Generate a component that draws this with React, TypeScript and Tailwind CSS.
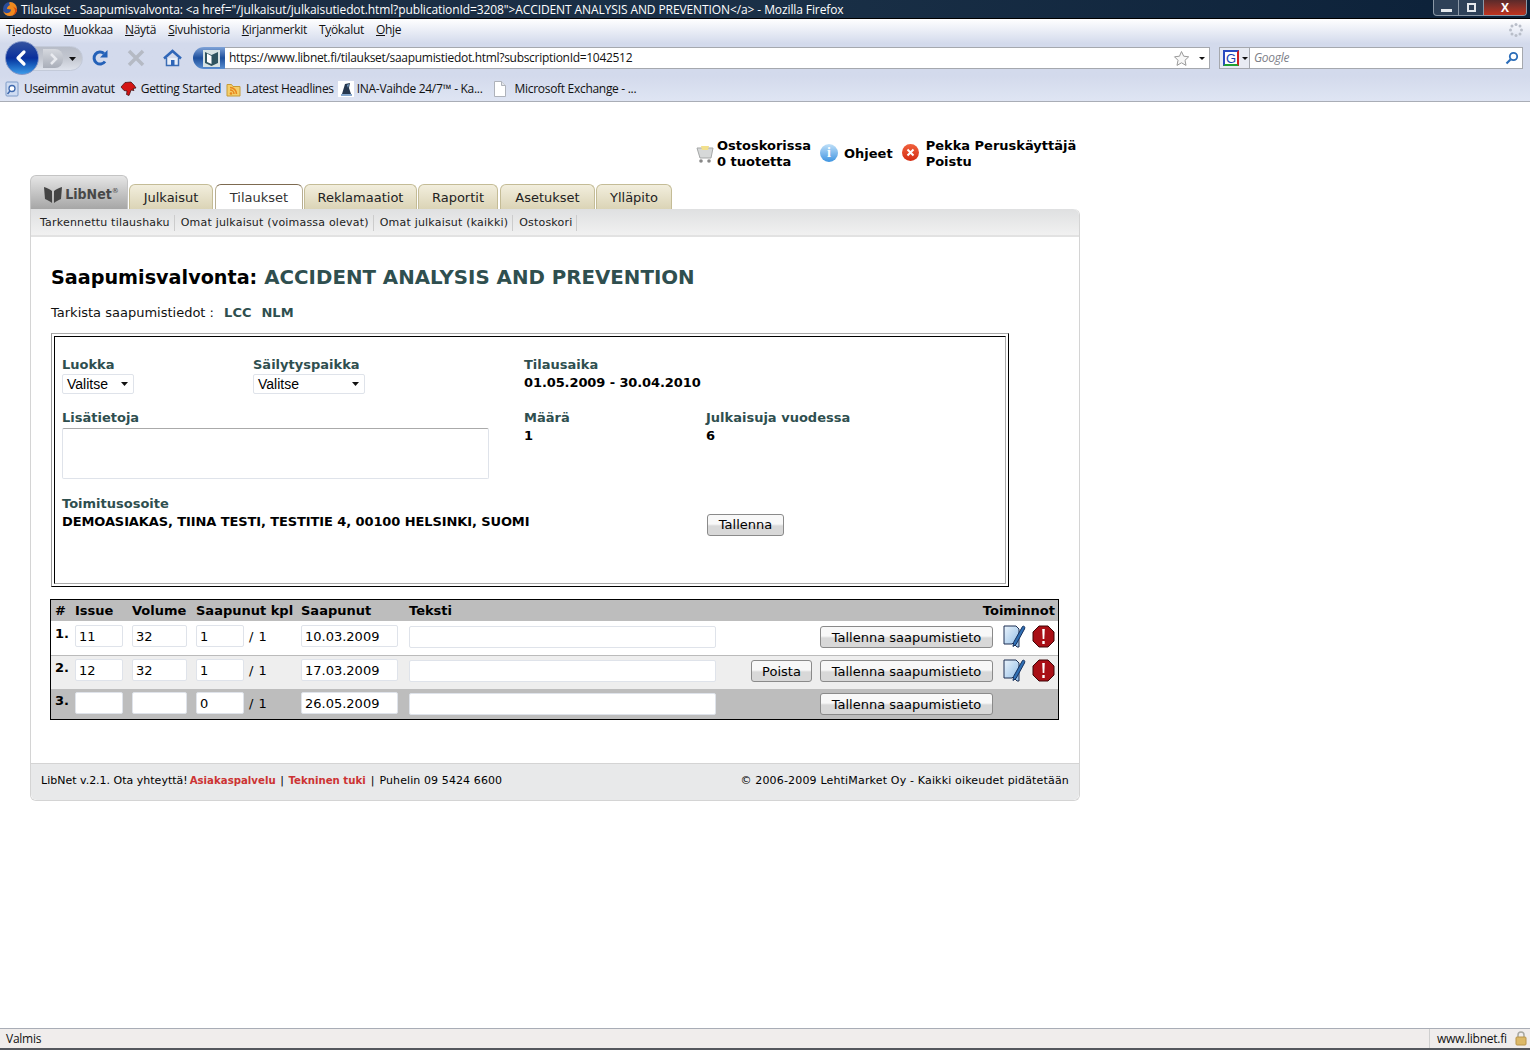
const chromeFont = "font-['Open_Sans','Noto_Sans',sans-serif]";

function Underlined({ text, at }: { text: string; at: number }) {
  return (
    <span>
      {text.slice(0, at)}
      <span className="underline">{text[at]}</span>
      {text.slice(at + 1)}
    </span>
  );
}

function FirefoxIcon() {
  return (
    <svg width="16" height="16" viewBox="0 0 16 16">
      <circle cx="8" cy="8" r="7" fill="#2a4d9c" />
      <path d="M8 1a7 7 0 0 1 7 7c0 4-3 7-7 7-3.500 0-6-2-7-5 1 1.500 3 2.500 5 2 2-.5 3-2 3-3.500L5 8c0-2 1-3 3-4L7 2z" fill="#f08a1d" />
      <path d="M15 8c0 4-3 7-7 7 2 0 5-2 5-5 0-2-1-4-3-5z" fill="#d9480f" />
    </svg>
  );
}

function NavButtons() {
  return (
    <div className="relative h-[30px] w-[76px] shrink-0">
      <div className="absolute left-[12px] top-[3px] h-[25px] w-[66px] rounded-r-full border border-[#c3cad9] bg-gradient-to-b from-[#b7bcc7] via-[#c4c8d1] to-[#dfe3ec]" />
      <div className="absolute left-[38px] top-[6px] h-[19px] w-[20px] rounded-r-[8px] bg-gradient-to-b from-[#d6d9df] to-[#a9aeb9]" />
      <div className="absolute left-[0px] top-[-2px] flex h-[34px] w-[34px] items-center justify-center rounded-full border border-[#8296c8] bg-gradient-to-b from-[#33519f] via-[#0a2f9c] to-[#3d9ae8]">
        <svg width="18" height="18" viewBox="0 0 18 18">
          <path d="M11 3 5 9l6 6" fill="none" stroke="#fff" strokeWidth="3.200" strokeLinecap="round" strokeLinejoin="round" />
        </svg>
      </div>
      <svg className="absolute left-[41px] top-[9px]" width="14" height="14" viewBox="0 0 14 14">
        <path d="M5 2l5 5-5 5" fill="none" stroke="#e8eaef" strokeWidth="2.500" />
      </svg>
      <svg className="absolute left-[64px] top-[14px]" width="7" height="4" viewBox="0 0 7 4">
        <path d="M0 0h7L3.500 4z" fill="#111" />
      </svg>
    </div>
  );
}

function ReloadIcon() {
  return (
    <svg width="18" height="18" viewBox="0 0 18 18">
      <path d="M14 12.500A6 6 0 1 1 13 4.500" fill="none" stroke="#2461b8" strokeWidth="3" />
      <path d="M16.500 1v7.500H9z" fill="#2461b8" />
    </svg>
  );
}

function StopIcon() {
  return (
    <svg width="18" height="18" viewBox="0 0 18 18">
      <path d="M2 2l14 14M16 2 2 16" stroke="#b5bac4" strokeWidth="3.500" />
    </svg>
  );
}

function HomeIcon() {
  return (
    <svg width="19" height="18" viewBox="0 0 19 18">
      <path d="M3.500 9v7.500h12V9" fill="#e8eef8" stroke="#3a6cb4" strokeWidth="1.500" />
      <path d="M1 9.500 9.500 2l8.500 7.500" fill="none" stroke="#2f66b8" strokeWidth="2.500" />
      <rect x="8" y="11" width="3.500" height="5.500" fill="#2f66b8" />
    </svg>
  );
}

function SiteIdentity() {
  return (
    <div className="flex h-[22px] w-[32px] shrink-0 items-center justify-end rounded-l-full bg-gradient-to-b from-[#7fa3d8] via-[#1d4f9c] to-[#5b8fd0] pr-[5px]">
      <span className="flex h-[17px] w-[17px] items-center justify-center bg-[#d8e4e4]">
        <svg width="15" height="15" viewBox="0 0 15 15">
          <path d="M1 1l6.500 3L14 1v11l-6.500 3L1 12z" fill="#2f5560" />
          <path d="M3 2.500 7.500 5v8L3 11z" fill="#fff" />
        </svg>
      </span>
    </div>
  );
}

function BookmarkIcon({ kind }: { kind: string }) {
  if (kind === "recent") {
    return (
      <svg width="16" height="16" viewBox="0 0 16 16">
        <rect x="2" y="1" width="12" height="14" rx="1" fill="#cfdcf2" stroke="#7f9cc8" />
        <circle cx="8" cy="7.500" r="3" fill="#fff" stroke="#3f69ad" strokeWidth="1.300" />
        <path d="M6 10l-2.500 3" stroke="#3f69ad" strokeWidth="1.500" />
      </svg>
    );
  }
  if (kind === "start") {
    return (
      <svg width="17" height="16" viewBox="0 0 17 16">
        <path d="M1 6 5 1.500l6-.5 3 3 2 3-3 .5 1 2-3-.5-1 3-1 2.500-2.500-1L7 10 4 9.500z" fill="#d41414" stroke="#3a0a0a" strokeWidth=".7" />
      </svg>
    );
  }
  if (kind === "rss") {
    return (
      <svg width="16" height="16" viewBox="0 0 16 16">
        <path d="M1 3.500V15h13V5.500H7L5.500 3.500z" fill="#f3cf6c" stroke="#c79b36" />
        <circle cx="5" cy="12.500" r="1.300" fill="#e8851c" />
        <path d="M4 9a4 4 0 0 1 4 4M4 6.500A6.500 6.500 0 0 1 10.500 13" fill="none" stroke="#e8851c" strokeWidth="1.500" />
      </svg>
    );
  }
  if (kind === "ina") {
    return (
      <svg width="16" height="16" viewBox="0 0 16 16">
        <rect width="16" height="16" fill="#fff" />
        <path d="M4 13 7 3l5-1-1 5 2 6z" fill="#26384f" />
        <path d="M9 4l2-1-1 4z" fill="#7fa8d0" />
        <path d="M3 14h11" stroke="#5b88bb" strokeWidth="1.500" />
      </svg>
    );
  }
  return (
    <svg width="16" height="16" viewBox="0 0 16 16">
      <path d="M2.500 .5h7l4 4v11h-11z" fill="#fff" stroke="#aeb2ba" />
      <path d="M9.500 .5v4h4" fill="#e4e6ea" stroke="#aeb2ba" />
    </svg>
  );
}

function BrowserChrome() {
  const menus: [string, number][] = [
    ["Tiedosto", 1],
    ["Muokkaa", 0],
    ["Näytä", 0],
    ["Sivuhistoria", 0],
    ["Kirjanmerkit", 0],
    ["Työkalut", 1],
    ["Ohje", 0],
  ];
  const bookmarks = [
    { kind: "recent", label: "Useimmin avatut", item: "mr-[5px] gap-[4px]" },
    { kind: "start", label: "Getting Started", item: "mr-[5px] gap-[4px]" },
    { kind: "rss", label: "Latest Headlines", item: "mr-[4px] gap-[4px]" },
    { kind: "ina", label: "INA-Vaihde 24/7™ - Ka...", item: "mr-[9px] gap-[3px]" },
    { kind: "page", label: "Microsoft Exchange - ...", item: "gap-[7px]" },
  ];

  return (
    <div className={`${chromeFont} shrink-0 text-[12px] tracking-[-0.3px]`}>
      <div className="flex h-[18px] items-center justify-between bg-gradient-to-r from-[#1c2c42] via-[#1a3047] to-[#0b2038] pl-[2px] text-[12px] tracking-[-0.1px] text-white">
        <div className="flex items-center gap-[3px]">
          <FirefoxIcon />
          <span className="whitespace-nowrap pt-px">
            {'Tilaukset - Saapumisvalvonta: <a href="/julkaisut/julkaisutiedot.html?publicationId=3208">ACCIDENT ANALYSIS AND PREVENTION</a> - Mozilla Firefox'}
          </span>
        </div>
        <div className="mr-[3px] flex h-[16px] self-start overflow-hidden rounded-b-[4px] border border-t-0 border-[#8b98a6] bg-[#2e4158]">
          <span className="flex w-[25px] items-end justify-center border-r border-[#8b98a6] pb-[3px]">
            <span className="h-[3px] w-[11px] bg-[#e4e8ec]" />
          </span>
          <span className="flex w-[25px] items-center justify-center border-r border-[#8b98a6]">
            <span className="h-[9px] w-[9px] border-2 border-[#e4e8ec]" />
          </span>
          <span className="flex w-[42px] items-center justify-center bg-gradient-to-b from-[#5a2a2a] to-[#c0321c] text-[12px] font-bold leading-none">
            X
          </span>
        </div>
      </div>
      <div className="h-px bg-black" />
      <div className="bg-gradient-to-b from-[#ffffff] via-[#d3daec] via-[30%] to-[#d3daec]">
        <div className="flex h-[21px] items-center justify-between pl-[6px] pr-[6px] text-[#111]">
          <div className="flex gap-[12px]">
            {menus.map(([m, at]) => (
              <Underlined key={m} text={m} at={at} />
            ))}
          </div>
          <svg width="16" height="16" viewBox="0 0 16 16">
            <g fill="#b9bec9">
              <circle cx="8" cy="2.500" r="1.500" />
              <circle cx="12" cy="4" r="1.500" />
              <circle cx="13.500" cy="8" r="1.500" />
              <circle cx="12" cy="12" r="1.500" />
              <circle cx="8" cy="13.500" r="1.500" />
              <circle cx="4" cy="12" r="1.500" />
              <circle cx="2.500" cy="8" r="1.500" />
              <circle cx="4" cy="4" r="1.500" />
            </g>
          </svg>
        </div>
        <div className="flex h-[36px] items-center pl-[5px] pr-[7px]">
          <NavButtons />
          <div className="ml-[10px] flex w-[100px] shrink-0 items-center gap-[18px]">
            <ReloadIcon />
            <StopIcon />
            <HomeIcon />
          </div>
          <div className="ml-[2px] flex grow items-center">
            <SiteIdentity />
            <div className="flex h-[22px] grow items-center justify-between border border-l-0 border-[#a5a8ae] bg-white pl-[4px] pr-[4px] text-[#111]">
              <span>https://www.libnet.fi/tilaukset/saapumistiedot.html?subscriptionId=1042512</span>
              <span className="flex items-center gap-[9px]">
                <svg width="17" height="17" viewBox="0 0 17 17">
                  <path d="M8.500 1.500l2.200 4.700 5 .6-3.700 3.500 1 5.100-4.500-2.600-4.500 2.600 1-5.100L1.500 6.800l5-.6z" fill="#f7f7f7" stroke="#9a9a9a" />
                </svg>
                <svg width="6" height="3" viewBox="0 0 6 3">
                  <path d="M0 0h6L3 3z" fill="#111" />
                </svg>
              </span>
            </div>
          </div>
          <div className="ml-[9px] flex h-[22px] w-[304px] shrink-0 items-center border border-[#a5a8ae] bg-white">
            <div className="flex h-full w-[30px] items-center gap-[3px] border-r border-[#a5a8ae] bg-[#e8ebf3] pl-[3px]">
              <span className="flex h-[16px] w-[16px] items-center justify-center border-2 border-t-[#2a4bc0] border-l-[#2a4bc0] border-r-[#d02020] border-b-[#20a030] bg-white font-['Liberation_Sans',sans-serif] text-[13px] leading-none text-[#1a3fb0]">
                G
              </span>
              <svg width="6" height="3" viewBox="0 0 6 3">
                <path d="M0 0h6L3 3z" fill="#111" />
              </svg>
            </div>
            <span className="ml-[4px] grow italic text-[#7d8088]">Google</span>
            <svg className="mr-[3px]" width="14" height="14" viewBox="0 0 14 14">
              <circle cx="8.500" cy="5.500" r="3.700" fill="none" stroke="#2a6cb8" strokeWidth="1.800" />
              <path d="M5.500 8.500 1.500 12.500" stroke="#2a6cb8" strokeWidth="2.200" />
            </svg>
          </div>
        </div>
        <div className="flex h-[25px] items-center bg-gradient-to-b from-[#d3daec] to-[#dfe5f3] pl-[4px] text-[#111]">
          {bookmarks.map((b) => (
            <div key={b.label} className={`${b.item} flex items-center`}>
              <BookmarkIcon kind={b.kind} />
              <span>{b.label}</span>
            </div>
          ))}
        </div>
      </div>
      <div className="h-px bg-[#a9adb6]" />
    </div>
  );
}

function UserLinks() {
  return (
    <div className="ml-[665px] flex h-[73px] w-[385px] items-start pt-[36px] text-[13px] font-bold leading-[16px] text-black">
      <svg className="ml-[1px] mt-[6px]" width="18" height="20" viewBox="0 0 18 20">
        <path d="M1 4h16l-2 10H4z" fill="#d6d8d8" stroke="#a5a7a7" />
        <path d="M5 2h8l-1 4H6z" fill="#f2e08c" />
        <circle cx="5" cy="17" r="1.800" fill="#888" />
        <circle cx="13" cy="17" r="1.800" fill="#888" />
      </svg>
      <div className="ml-[3px] whitespace-nowrap">
        Ostoskorissa
        <br />
        0 tuotetta
      </div>
      <span className="ml-[9px] mt-[6px] flex h-[18px] w-[18px] items-center justify-center rounded-full bg-gradient-to-b from-[#bfe0f8] to-[#3c94e0] font-['Liberation_Serif',serif] text-[14px] text-white">
        i
      </span>
      <span className="ml-[6px] mt-[8px]">Ohjeet</span>
      <span className="ml-[9px] mt-[6px] flex h-[17px] w-[17px] items-center justify-center rounded-full bg-gradient-to-b from-[#f0603c] to-[#d42a10]">
        <svg width="9" height="9" viewBox="0 0 9 9">
          <path d="M1.500 1.500l6 6M7.500 1.500l-6 6" stroke="#fff" strokeWidth="2" />
        </svg>
      </span>
      <div className="ml-[7px] whitespace-nowrap">
        Pekka Peruskäyttäjä
        <br />
        Poistu
      </div>
    </div>
  );
}

function Tabs() {
  const tabs = [
    { label: "Julkaisut", w: "w-[84px]", ml: "ml-[1px]" },
    { label: "Tilaukset", w: "w-[88px]", ml: "ml-[2px]", active: true },
    { label: "Reklamaatiot", w: "w-[113px]", ml: "ml-[1px]" },
    { label: "Raportit", w: "w-[80px]", ml: "ml-[1px]" },
    { label: "Asetukset", w: "w-[95px]", ml: "ml-[2px]" },
    { label: "Ylläpito", w: "w-[76px]", ml: "ml-[1px]" },
  ];
  return (
    <div className="flex h-[34px] items-end">
      <div className="flex h-[34px] w-[98px] items-center justify-center rounded-t-[6px] border border-b-0 border-[#c4c4c4] bg-gradient-to-b from-[#e6e6e6] to-[#a6a6a6] pl-[5px] pt-[4px]">
        <svg width="18" height="16" viewBox="0 0 18 16">
          <path d="M0 0c3 1 6 2 8 4v12C6 14 3 13 1 12zM18 0c-3 1-6 2-8 4v12c2-2 5-3 7-4z" fill="#444" />
        </svg>
        <span className="ml-[3px] font-['DejaVu_Sans_Condensed','DejaVu_Sans',sans-serif] text-[14px] font-bold text-[#484848]">
          LibNet
        </span>
        <span className="mb-[6px] text-[7px] text-[#484848]">®</span>
      </div>
      {tabs.map((t) => (
        <div
          key={t.label}
          className={`${t.w} ${t.ml} flex h-[25px] items-center justify-center rounded-t-[6px] border border-b-0 pt-[2px] text-[13px] ${
            t.active
              ? "border-[#b8ae92] border-t-[#7d6a50] bg-white text-[#333]"
              : "border-[#c4bc96] bg-gradient-to-b from-[#f2eedd] to-[#dbd4b6] text-[#222]"
          }`}
        >
          {t.label}
        </div>
      ))}
    </div>
  );
}

function SubNav() {
  const links = [
    "Tarkennettu tilaushaku",
    "Omat julkaisut (voimassa olevat)",
    "Omat julkaisut (kaikki)",
    "Ostoskori",
  ];
  return (
    <div className="flex h-[28px] items-center rounded-tr-[6px] border-b-2 border-[#e2e2e2] bg-gradient-to-b from-[#dfe0e1] to-[#f1f1f1] pl-[9px] pt-[2px] text-[11px] tracking-[0.2px] text-[#222]">
      {links.map((l) => (
        <span key={l} className="mr-[6px] flex h-[16px] items-center whitespace-nowrap border-r border-[#ccc] pr-[4px]">
          {l}
        </span>
      ))}
    </div>
  );
}

function Select({ width }: { width: string }) {
  return (
    <div className={`${width} flex h-[20px] items-center justify-between rounded-[2px] border border-[#dfe3ea] pl-[4px] pr-[5px] font-['Liberation_Sans',sans-serif] text-[14px] text-black`}>
      Valitse
      <svg width="7" height="4" viewBox="0 0 7 4">
        <path d="M0 0h7L3.500 4z" fill="#111" />
      </svg>
    </div>
  );
}

function Label({ children }: { children: React.ReactNode }) {
  return <div className="text-[13px] font-bold leading-[18px] text-[#2f4f4f]">{children}</div>;
}

function Value({ children }: { children: React.ReactNode }) {
  return <div className="text-[13px] font-bold leading-[18px] tracking-[-0.1px] text-black">{children}</div>;
}

function Btn({ children, w }: { children: React.ReactNode; w: string }) {
  return (
    <button className={`${w} h-[22px] rounded-[3px] border border-[#8a8a8a] bg-gradient-to-b from-[#f8f8f8] from-[45%] to-[#d8d8d8] to-[55%] text-[13px] leading-none text-black`}>
      {children}
    </button>
  );
}

function DetailsBox() {
  return (
    <div className="ml-[20px] mt-[11px] h-[254px] w-[958px] border border-t-[#aaa] border-l-[#999] border-r-black border-b-black p-[2px]">
      <div className="grid h-full grid-cols-[191px_271px_182px_1fr] grid-rows-[53px_86px_1fr] border border-t-black border-l-black border-r-[#aaa] border-b-[#aaa] pl-[7px] pt-[19px]">
        <div>
          <Label>Luokka</Label>
          <Select width="w-[72px]" />
        </div>
        <div>
          <Label>Säilytyspaikka</Label>
          <Select width="w-[112px]" />
        </div>
        <div className="col-span-2">
          <Label>Tilausaika</Label>
          <Value>01.05.2009 - 30.04.2010</Value>
        </div>
        <div className="col-span-2">
          <Label>Lisätietoja</Label>
          <div className="mt-px h-[51px] w-[427px] rounded-[2px] border border-[#dfe3ea] border-t-[#aaa]" />
        </div>
        <div>
          <Label>Määrä</Label>
          <Value>1</Value>
        </div>
        <div>
          <Label>Julkaisuja vuodessa</Label>
          <Value>6</Value>
        </div>
        <div className="col-span-3">
          <Label>Toimitusosoite</Label>
          <Value>DEMOASIAKAS, TIINA TESTI, TESTITIE 4, 00100 HELSINKI, SUOMI</Value>
        </div>
        <div className="pl-px pt-[17px]">
          <Btn w="w-[77px]">Tallenna</Btn>
        </div>
      </div>
    </div>
  );
}

function Field({ w, value }: { w: string; value?: string }) {
  return (
    <div className={`${w} flex h-[22px] items-center rounded-[2px] border border-[#dfe3ea] bg-white pl-[3px] pt-[2px] text-[13px] text-black`}>
      {value}
    </div>
  );
}

function EditIcon() {
  return (
    <svg width="23" height="23" viewBox="0 0 23 23">
      <defs>
        <linearGradient id="page" x1="0" y1="0" x2="1" y2="1">
          <stop offset="0" stopColor="#eaf3fb" />
          <stop offset="1" stopColor="#8fbce6" />
        </linearGradient>
      </defs>
      <path d="M1 1h12l3 3v18h-2l-4-4-1 1L1 19z" fill="url(#page)" stroke="#1d2f52" />
      <path d="M19.500 1.500c1.500-1 3 .5 2 2.500L13 19.500l-3 2 .5-4z" fill="#2f6fb4" stroke="#16305c" />
    </svg>
  );
}

function AlertIcon() {
  return (
    <svg width="23" height="23" viewBox="0 0 23 23">
      <path d="M7 1h9l6 6v9l-6 6H7l-6-6V7z" fill="#a90f16" stroke="#3f0608" />
      <path d="M10.200 4h2.600l-.5 10h-1.600z" fill="#fff" />
      <rect x="10.300" y="16" width="2.400" height="3" fill="#fff" />
    </svg>
  );
}

const tableCols = "grid grid-cols-[20px_57px_64px_105px_108px_1fr] pl-[4px]";

type RowData = {
  n: number;
  issue: string;
  volume: string;
  count: string;
  date: string;
  remove?: boolean;
  icons?: boolean;
  rowClass: string;
};

function ArrivalRow({ row }: { row: RowData }) {
  return (
    <div className={`${tableCols} ${row.rowClass} items-start text-[13px] text-black`}>
      <span className="font-bold leading-[18px]">{row.n}.</span>
      <Field w="w-[48px]" value={row.issue} />
      <Field w="w-[55px]" value={row.volume} />
      <div className="flex items-center">
        <Field w="w-[48px]" value={row.count} />
        <span className="ml-[5px] pt-[2px] tracking-[0.5px]">/ 1</span>
      </div>
      <Field w="w-[97px]" value={row.date} />
      <div className="flex items-center justify-between pr-[3px]">
        <Field w="w-[307px]" />
        <div className="flex w-[304px] items-center">
          <div className="mt-px w-[62px] shrink-0">{row.remove && <Btn w="w-[61px]">Poista</Btn>}</div>
          <div className="ml-[7px] mt-px shrink-0">
            <Btn w="w-[173px]">Tallenna saapumistieto</Btn>
          </div>
          {row.icons && (
            <div className="ml-[10px] flex shrink-0 gap-[6px]">
              <EditIcon />
              <AlertIcon />
            </div>
          )}
        </div>
      </div>
    </div>
  );
}

function ArrivalTable() {
  const rows: RowData[] = [
    { n: 1, issue: "11", volume: "32", count: "1", date: "10.03.2009", icons: true, rowClass: "h-[35px] pt-[4px] bg-white border-b border-[#bbb]" },
    { n: 2, issue: "12", volume: "32", count: "1", date: "17.03.2009", remove: true, icons: true, rowClass: "h-[33px] pt-[3px] bg-[#eeeeee]" },
    { n: 3, issue: "", volume: "", count: "0", date: "26.05.2009", rowClass: "h-[30px] pt-[3px] bg-[#bdbdbd]" },
  ];
  return (
    <div className="ml-[19px] mt-[12px] w-[1009px] border border-black">
      <div className={`${tableCols} h-[21px] items-center bg-[#bdbdbd] text-[13px] font-bold text-black`}>
        <span>#</span>
        <span>Issue</span>
        <span>Volume</span>
        <span>Saapunut kpl</span>
        <span>Saapunut</span>
        <div className="flex justify-between pr-[3px]">
          <span>Teksti</span>
          <span>Toiminnot</span>
        </div>
      </div>
      {rows.map((r) => (
        <ArrivalRow key={r.n} row={r} />
      ))}
    </div>
  );
}

function Footer() {
  return (
    <div className="flex h-[37px] items-center justify-between rounded-b-[6px] border-t border-[#d4d4d4] bg-[#e8e9ea] px-[10px] pb-px text-[11px] text-black">
      <span className="flex items-baseline whitespace-nowrap">
        LibNet v.2.1. Ota yhteyttä!
        <b className="ml-[2px] text-[10.200px] text-[#cc3333]">Asiakaspalvelu</b>
        <span className="mx-[4.500px]">|</span>
        <b className="text-[10.200px] text-[#cc3333]">Tekninen tuki</b>
        <span className="mx-[5px]">|</span>
        <span className="tracking-[0.1px]">Puhelin 09 5424 6600</span>
      </span>
      <span className="tracking-[0.17px]">© 2006-2009 LehtiMarket Oy - Kaikki oikeudet pidätetään</span>
    </div>
  );
}

function Page() {
  return (
    <div className="ml-[30px] w-[1050px] font-['DejaVu_Sans',sans-serif]">
      <UserLinks />
      <Tabs />
      <div className="rounded-b-[6px] rounded-tr-[6px] border-x border-b border-[#d4d4d4]">
        <SubNav />
        <h1 className="ml-[20px] mt-[28px] flex h-[26px] items-center text-[19.200px] font-bold text-black">
          Saapumisvalvonta:
          <span className="ml-[7px] text-[19.800px] text-[#2f4f4f]">ACCIDENT ANALYSIS AND PREVENTION</span>
        </h1>
        <div className="ml-[20px] mt-[13px] text-[13px] leading-[18px] text-[#111]">
          Tarkista saapumistiedot : <b className="ml-[6px] text-[#2f4f4f]">LCC</b>
          <b className="ml-[10px] text-[#2f4f4f]">NLM</b>
        </div>
        <DetailsBox />
        <ArrivalTable />
        <div className="h-[43px]" />
        <Footer />
      </div>
    </div>
  );
}

function StatusBar() {
  return (
    <div className={`${chromeFont} shrink-0 text-[12px] tracking-[-0.25px] text-[#111]`}>
      <div className="flex h-[20px] items-center justify-between border-t border-[#a9adb6] bg-[#f0edec]">
        <span className="ml-[6px]">Valmis</span>
        <div className="flex h-full w-[101px] items-center justify-between border-l border-[#cfcfcf] pl-[7px] pr-[3px]">
          <span>www.libnet.fi</span>
          <svg width="12" height="15" viewBox="0 0 12 15">
            <path d="M3 6V4a3 3 0 0 1 6 0v2" fill="none" stroke="#a8a8a0" strokeWidth="1.500" />
            <rect x="1" y="6" width="10" height="8" rx="1" fill="#dcb968" stroke="#b8944a" />
          </svg>
        </div>
      </div>
      <div className="h-[2px] bg-[#55585e]" />
    </div>
  );
}

export default function App() {
  return (
    <div className="flex h-[1050px] w-[1530px] flex-col overflow-hidden bg-white">
      <BrowserChrome />
      <div className="grow">
        <Page />
      </div>
      <StatusBar />
    </div>
  );
}
